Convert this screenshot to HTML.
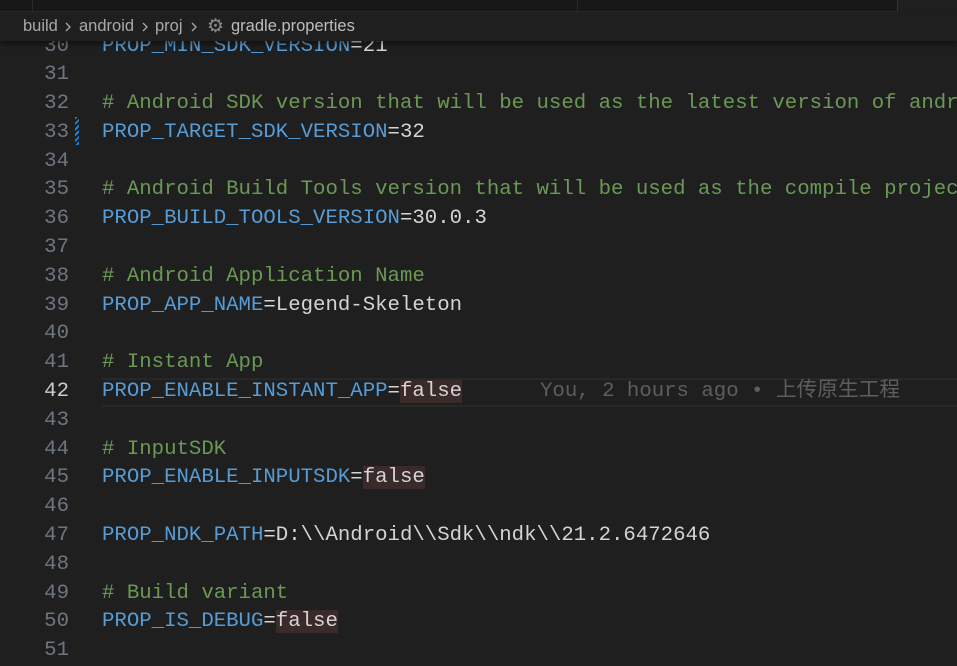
<!DOCTYPE html>
<html><head><meta charset="utf-8"><style>
html,body{margin:0;padding:0;width:957px;height:660px;overflow:hidden;background:#1f1f1f}
.tabs{position:absolute;left:0;top:0;width:957px;height:12px;background:#181818;border-bottom:1px solid #2b2b2b;box-sizing:border-box}
.tabs .t{position:absolute;top:0;height:12px;border-right:1px solid #2b2b2b;box-sizing:border-box}
.crumb{position:absolute;left:0;top:12px;width:957px;height:29px;background:#1f1f1f;box-shadow:0 3px 5px rgba(0,0,0,.45);z-index:2;font:16.5px "Liberation Sans",sans-serif;color:#a9a9a9;line-height:29px}
.crumb span{position:absolute;top:0}
.code{position:absolute;left:0;top:32.5px;width:957px;font:20.7px/28.8px "Liberation Mono",monospace}
.code span{white-space:pre}
.l{position:relative;height:28.8px}
.n{position:absolute;right:888px;color:#6e7681;text-align:right}
.c{position:absolute;left:102px}
.k{color:#569cd6}.m{color:#6a9955}.v{color:#d4d4d4}
.f{background:#3b2a2a;color:#d4d4d4}
.cur{position:absolute;left:102px;right:0;top:0;height:28.8px;box-sizing:border-box;border-top:2px solid #282828;border-bottom:2px solid #282828}
.blame{position:absolute;left:540px;color:#5e5e5e;font-family:"Liberation Mono","Noto Sans CJK SC",monospace}
</style></head><body>
<div class="tabs"><div class="t" style="left:0;width:33px"></div><div class="t" style="left:33px;width:545px"></div><div class="t" style="left:578px;width:320px;border-right:1px solid #333"></div><div class="t" style="left:898px;width:59px;background:#1f1f1f;border:none"></div></div>
<div class="crumb"><span style="left:23px">build</span><svg style="position:absolute;left:64px;top:10px" width="8" height="10"><path d="M2 1l4 4-4 4" stroke="#a9a9a9" stroke-width="1.3" fill="none"/></svg><span style="left:79px">android</span><svg style="position:absolute;left:141px;top:10px" width="8" height="10"><path d="M2 1l4 4-4 4" stroke="#a9a9a9" stroke-width="1.3" fill="none"/></svg><span style="left:155px">proj</span><svg style="position:absolute;left:190px;top:10px" width="8" height="10"><path d="M2 1l4 4-4 4" stroke="#a9a9a9" stroke-width="1.3" fill="none"/></svg><span style="left:207px;color:#8a8a8a;font-size:19px">⚙</span><span style="left:231px;color:#bdbdbd">gradle.properties</span></div>
<div style="position:absolute;left:75px;top:117px;width:4px;height:28px;background:repeating-linear-gradient(135deg,#1b80d0 0 2px,#1f1f1f 2px 4px)"></div>
<div class="code"><div class="l"><span class="n">30</span><span class="c"><span class="k">PROP_MIN_SDK_VERSION</span><span class="v">=21</span></span></div><div class="l"><span class="n">31</span></div><div class="l"><span class="n">32</span><span class="c m"># Android SDK version that will be used as the latest version of android</span></div><div class="l"><span class="n">33</span><span class="c"><span class="k">PROP_TARGET_SDK_VERSION</span><span class="v">=32</span></span></div><div class="l"><span class="n">34</span></div><div class="l"><span class="n">35</span><span class="c m"># Android Build Tools version that will be used as the compile project</span></div><div class="l"><span class="n">36</span><span class="c"><span class="k">PROP_BUILD_TOOLS_VERSION</span><span class="v">=30.0.3</span></span></div><div class="l"><span class="n">37</span></div><div class="l"><span class="n">38</span><span class="c m"># Android Application Name</span></div><div class="l"><span class="n">39</span><span class="c"><span class="k">PROP_APP_NAME</span><span class="v">=Legend-Skeleton</span></span></div><div class="l"><span class="n">40</span></div><div class="l"><span class="n">41</span><span class="c m"># Instant App</span></div><div class="l"><div class="cur"></div><span class="n" style="color:#cccccc">42</span><span class="c"><span class="k">PROP_ENABLE_INSTANT_APP</span><span class="v">=</span><span class="f">false</span></span><span class="blame">You, 2 hours ago • 上传原生工程</span></div><div class="l"><span class="n">43</span></div><div class="l"><span class="n">44</span><span class="c m"># InputSDK</span></div><div class="l"><span class="n">45</span><span class="c"><span class="k">PROP_ENABLE_INPUTSDK</span><span class="v">=</span><span class="f">false</span></span></div><div class="l"><span class="n">46</span></div><div class="l"><span class="n">47</span><span class="c"><span class="k">PROP_NDK_PATH</span><span class="v">=D:\\Android\\Sdk\\ndk\\21.2.6472646</span></span></div><div class="l"><span class="n">48</span></div><div class="l"><span class="n">49</span><span class="c m"># Build variant</span></div><div class="l"><span class="n">50</span><span class="c"><span class="k">PROP_IS_DEBUG</span><span class="v">=</span><span class="f">false</span></span></div><div class="l"><span class="n">51</span></div></div>
</body></html>
